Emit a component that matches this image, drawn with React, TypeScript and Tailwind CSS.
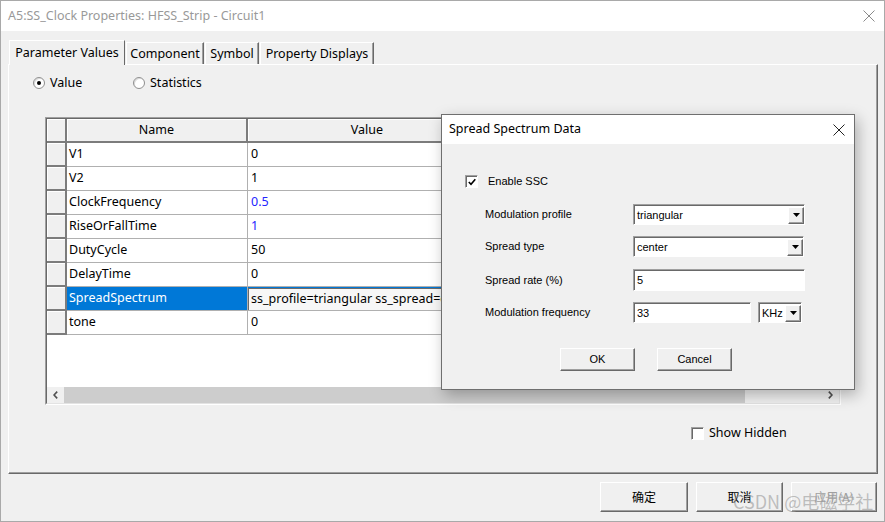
const raised =
  "border border-t-white border-l-white border-r-[#696969] border-b-[#696969] shadow-[inset_-1px_-1px_0_#a0a0a0]"
const sunken =
  "border border-t-[#a0a0a0] border-l-[#a0a0a0] border-r-white border-b-white"

const rows = [
  { name: "V1", value: "0" },
  { name: "V2", value: "1" },
  { name: "ClockFrequency", value: "0.5", blue: true },
  { name: "RiseOrFallTime", value: "1", blue: true },
  { name: "DutyCycle", value: "50" },
  { name: "DelayTime", value: "0" },
  {
    name: "SpreadSpectrum",
    value: "ss_profile=triangular ss_spread=center ss_rate=5 ss_freq=33KHz",
    selected: true,
  },
  { name: "tone", value: "0" },
]

const CloseX = ({ color }: { color: string }) => (
  <svg width="12" height="12" viewBox="0 0 12 12" fill="none" stroke={color} strokeWidth="1">
    <path d="M0.5 0.5 11.5 11.5M11.5 0.5 0.5 11.5" />
  </svg>
)

const Arrow = () => (
  <svg width="7" height="4" viewBox="0 0 7 4">
    <path d="M0 0h7L3.5 4z" fill="#000" />
  </svg>
)

const Chevron = ({ dir }: { dir: "left" | "right" }) => (
  <svg width="5" height="8" viewBox="0 0 5 8" fill="none" stroke="#505050" strokeWidth="1.6">
    <path d={dir === "left" ? "M4.2 0.6 1 4l3.2 3.4" : "M0.8 0.6 4 4 0.8 7.4"} />
  </svg>
)

// classic combo box
const Combo = ({ text, width }: { text: string; width: string }) => (
  <div className={`flex h-[21px] items-center bg-white ${sunken} ${width}`}>
    <div className="flex h-full flex-1 items-center border-t border-l border-[#696969] pl-[2px]">
      {text}
    </div>
    <div className="flex h-full items-center border-t border-[#696969] bg-white">
      <div className={`flex h-[17px] w-[16px] items-center justify-center bg-[#f0f0f0] ${raised}`}>
        <Arrow />
      </div>
    </div>
  </div>
)

const Field = ({ text, width, h = "h-[21px]" }: { text: string; width: string; h?: string }) => (
  <div className={`bg-white ${sunken} ${width} ${h}`}>
    <div className="flex h-full items-center border-t border-l border-[#696969] pl-[2px]">{text}</div>
  </div>
)

const SpreadDialog = () => (
  <div className="absolute left-[440px] top-[113px] flex h-[276px] w-[414px] flex-col border border-[#6f6f6f] bg-[#f0f0f0] shadow-[3px_5px_14px_rgba(0,0,0,0.28)]">
    <div className="flex h-[29px] shrink-0 items-center justify-between bg-white pl-[7px] pr-[9px] text-[12.5px]">
      <span>Spread Spectrum Data</span>
      <CloseX color="#222" />
    </div>

    <div className="flex flex-col pl-[23px] pt-[31px] font-['Liberation_Sans',sans-serif] text-[11px]">
      <div className="flex h-[12px] items-center">
        <div className={`h-[13px] w-[13px] bg-white ${sunken}`}>
          <div className="flex h-full w-full items-center justify-center border-t border-l border-[#696969]">
            <svg width="8" height="8" viewBox="0 0 8 8" fill="none" stroke="#000" strokeWidth="1.6">
              <path d="M0.8 4 3 6.3 7.3 1.2" />
            </svg>
          </div>
        </div>
        <span className="ml-[10px]">Enable SSC</span>
      </div>

      <div className="mt-[17px] flex h-[21px] items-center pl-[20px]">
        <span className="w-[148px]">Modulation profile</span>
        <Combo text="triangular" width="w-[172px]" />
      </div>
      <div className="mt-[11px] flex h-[21px] items-center pl-[20px]">
        <span className="w-[148px]">Spread type</span>
        <Combo text="center" width="w-[171px]" />
      </div>
      <div className="mt-[12px] flex h-[22px] items-center pl-[20px]">
        <span className="w-[148px]">Spread rate (%)</span>
        <Field text="5" width="w-[172px]" h="h-[22px]" />
      </div>
      <div className="mt-[11px] flex h-[21px] items-center pl-[20px]">
        <span className="w-[148px]">Modulation frequency</span>
        <Field text="33" width="w-[118px]" />
        <div className="ml-[7px]">
          <Combo text="KHz" width="w-[44px]" />
        </div>
      </div>

      <div className="mt-[25px] flex gap-[22px] pl-[95px]">
        <button className={`h-[23px] w-[75px] bg-[#f0f0f0] ${raised}`}>OK</button>
        <button className={`h-[23px] w-[75px] bg-[#f0f0f0] ${raised}`}>Cancel</button>
      </div>
    </div>
  </div>
)

const ParamTable = () => (
  <div className="ml-[36px] mt-[28px] h-[288px] w-[796px] border border-t-[#a0a0a0] border-l-[#a0a0a0] border-r-white border-b-white">
    <div className="flex h-full flex-col border border-t-[#696969] border-l-[#696969] border-r-[#e3e3e3] border-b-[#e3e3e3] bg-white">
      {/* header */}
      <div className="flex h-[24px] shrink-0">
        <div className="w-[20px] border-r-2 border-b-2 border-[#7c7c7c] bg-[#f0f0f0] shadow-[inset_1px_1px_0_white]" />
        <div className="flex w-[181px] items-center justify-center border-r-2 border-b-2 border-[#7c7c7c] bg-[#f0f0f0] shadow-[inset_1px_1px_0_white]">
          Name
        </div>
        <div className="flex w-[240px] items-center justify-center border-r-2 border-b-2 border-[#7c7c7c] bg-[#f0f0f0] shadow-[inset_1px_1px_0_white]">
          Value
        </div>
        <div className="flex-1 border-b-2 border-[#7c7c7c] bg-[#f0f0f0]" />
      </div>

      {rows.map((r) => (
        <div key={r.name} className="flex h-[24px] shrink-0">
          <div className="w-[20px] border-r-2 border-b-2 border-[#7c7c7c] bg-[#f0f0f0] shadow-[inset_1px_1px_0_white]" />
          <div
            className={`flex w-[181px] items-center border-r border-b border-[#b0b0b0] pl-[2px] ${
              r.selected ? "bg-[#0078d7] text-white" : ""
            }`}
          >
            {r.name}
          </div>
          {r.selected ? (
            <div className="flex w-[240px] items-center overflow-hidden border-b border-[#b0b0b0] bg-[#0078d7] pt-px">
              <div className="flex h-full w-full items-center overflow-hidden whitespace-nowrap border-t border-l border-[#6a6a6a] bg-[#f7f7f7] pl-[2px] text-black">
                {r.value}
              </div>
            </div>
          ) : (
            <div
              className={`flex w-[240px] items-center border-r border-b border-[#b0b0b0] pl-[3px] ${
                r.blue ? "text-[#2424ff]" : ""
              }`}
            >
              {r.value}
            </div>
          )}
          <div className="flex-1 border-b border-[#b0b0b0]" />
        </div>
      ))}

      <div className="flex-1" />

      {/* horizontal scrollbar */}
      <div className="flex h-[16px] shrink-0 bg-[#f0f0f0]">
        <div className="flex w-[17px] items-center justify-center">
          <Chevron dir="left" />
        </div>
        <div className="w-[681px] bg-[#cdcdcd]" />
        <div className="flex-1" />
        <div className="flex w-[17px] items-center justify-center">
          <Chevron dir="right" />
        </div>
      </div>
    </div>
  </div>
)

const Radio = ({ checked }: { checked?: boolean }) => (
  <div className="flex h-[12px] w-[12px] items-center justify-center rounded-full border border-[#8f8f8f] bg-white shadow-[inset_1px_1px_0_#dcdcdc]">
    {checked && <div className="h-[4px] w-[4px] rounded-full bg-black" />}
  </div>
)

export default function App() {
  const tabs = [
    { label: "Parameter Values", w: "w-[116px]" },
    { label: "Component", w: "w-[78px]" },
    { label: "Symbol", w: "w-[54px]" },
    { label: "Property Displays", w: "w-[114px]" },
  ]

  return (
    <div className="relative flex h-[522px] w-[885px] flex-col overflow-hidden border border-[#a9a9a9] bg-[#f0f0f0] font-['Noto_Sans','Noto_Sans_CJK_SC',sans-serif] text-[12.5px] leading-none text-black">
      {/* title bar */}
      <div className="flex h-[30px] shrink-0 items-center justify-between bg-white pl-[7px] pr-[9px] text-[#999999]">
        <span>A5:SS_Clock Properties: HFSS_Strip - Circuit1</span>
        <CloseX color="#8a8a8a" />
      </div>

      <div className="flex flex-1 flex-col px-[7px] pt-[9px]">
        {/* tabs */}
        <div className="relative z-10 flex h-[24px] items-end pl-[1px]">
          {tabs.map((t, i) =>
            i === 0 ? (
              <div
                key={t.label}
                className={`-mb-px flex h-[25px] items-center justify-center border-t border-l border-white border-r border-r-[#696969] bg-[#f0f0f0] pt-px ${t.w}`}
              >
                {t.label}
              </div>
            ) : (
              <div
                key={t.label}
                className={`ml-[1px] flex h-[22px] items-center justify-center border-t border-l border-white border-r border-r-[#696969] bg-[#f0f0f0] pt-px shadow-[inset_-1px_0_0_#a0a0a0] ${t.w}`}
              >
                {t.label}
              </div>
            )
          )}
        </div>

        {/* tab panel */}
        <div className="flex h-[410px] w-[870px] flex-col border border-t-white border-l-white border-r-[#696969] border-b-[#696969] shadow-[inset_-1px_-1px_0_#a0a0a0]">
          <div className="mt-[12px] flex h-[12px] items-center pl-[24px]">
            <div className="flex w-[100px] items-center gap-[5px]">
              <Radio checked />
              <span>Value</span>
            </div>
            <div className="flex items-center gap-[5px]">
              <Radio />
              <span>Statistics</span>
            </div>
          </div>

          <ParamTable />

          <div className="ml-[682px] mt-[22px] flex h-[13px] items-center gap-[5px]">
            <div className={`h-[13px] w-[13px] bg-white ${sunken} shadow-[inset_1px_1px_0_#696969]`} />
            <span>Show Hidden</span>
          </div>
        </div>

        {/* bottom buttons */}
        <div className="mt-[8px] flex justify-end gap-[8px]">
          <button className={`h-[30px] w-[88px] bg-[#f0f0f0] font-['Noto_Sans_CJK_SC',sans-serif] text-[12px] ${raised}`}>
            确定
          </button>
          <button className={`h-[30px] w-[87px] bg-[#f0f0f0] font-['Noto_Sans_CJK_SC',sans-serif] text-[12px] ${raised}`}>
            取消
          </button>
          <button className={`h-[30px] w-[86px] bg-[#f0f0f0] font-['Noto_Sans_CJK_SC',sans-serif] text-[12px] text-[#a0a0a0] ${raised}`}>
            应用(A)
          </button>
        </div>
      </div>

      <SpreadDialog />

      {/* watermark */}
      <div className="pointer-events-none absolute left-[732px] top-[491px] font-['Noto_Sans_CJK_SC',sans-serif] text-[18px] text-[#9a9a9a]/60">
        CSDN @电磁学社
      </div>
    </div>
  )
}
